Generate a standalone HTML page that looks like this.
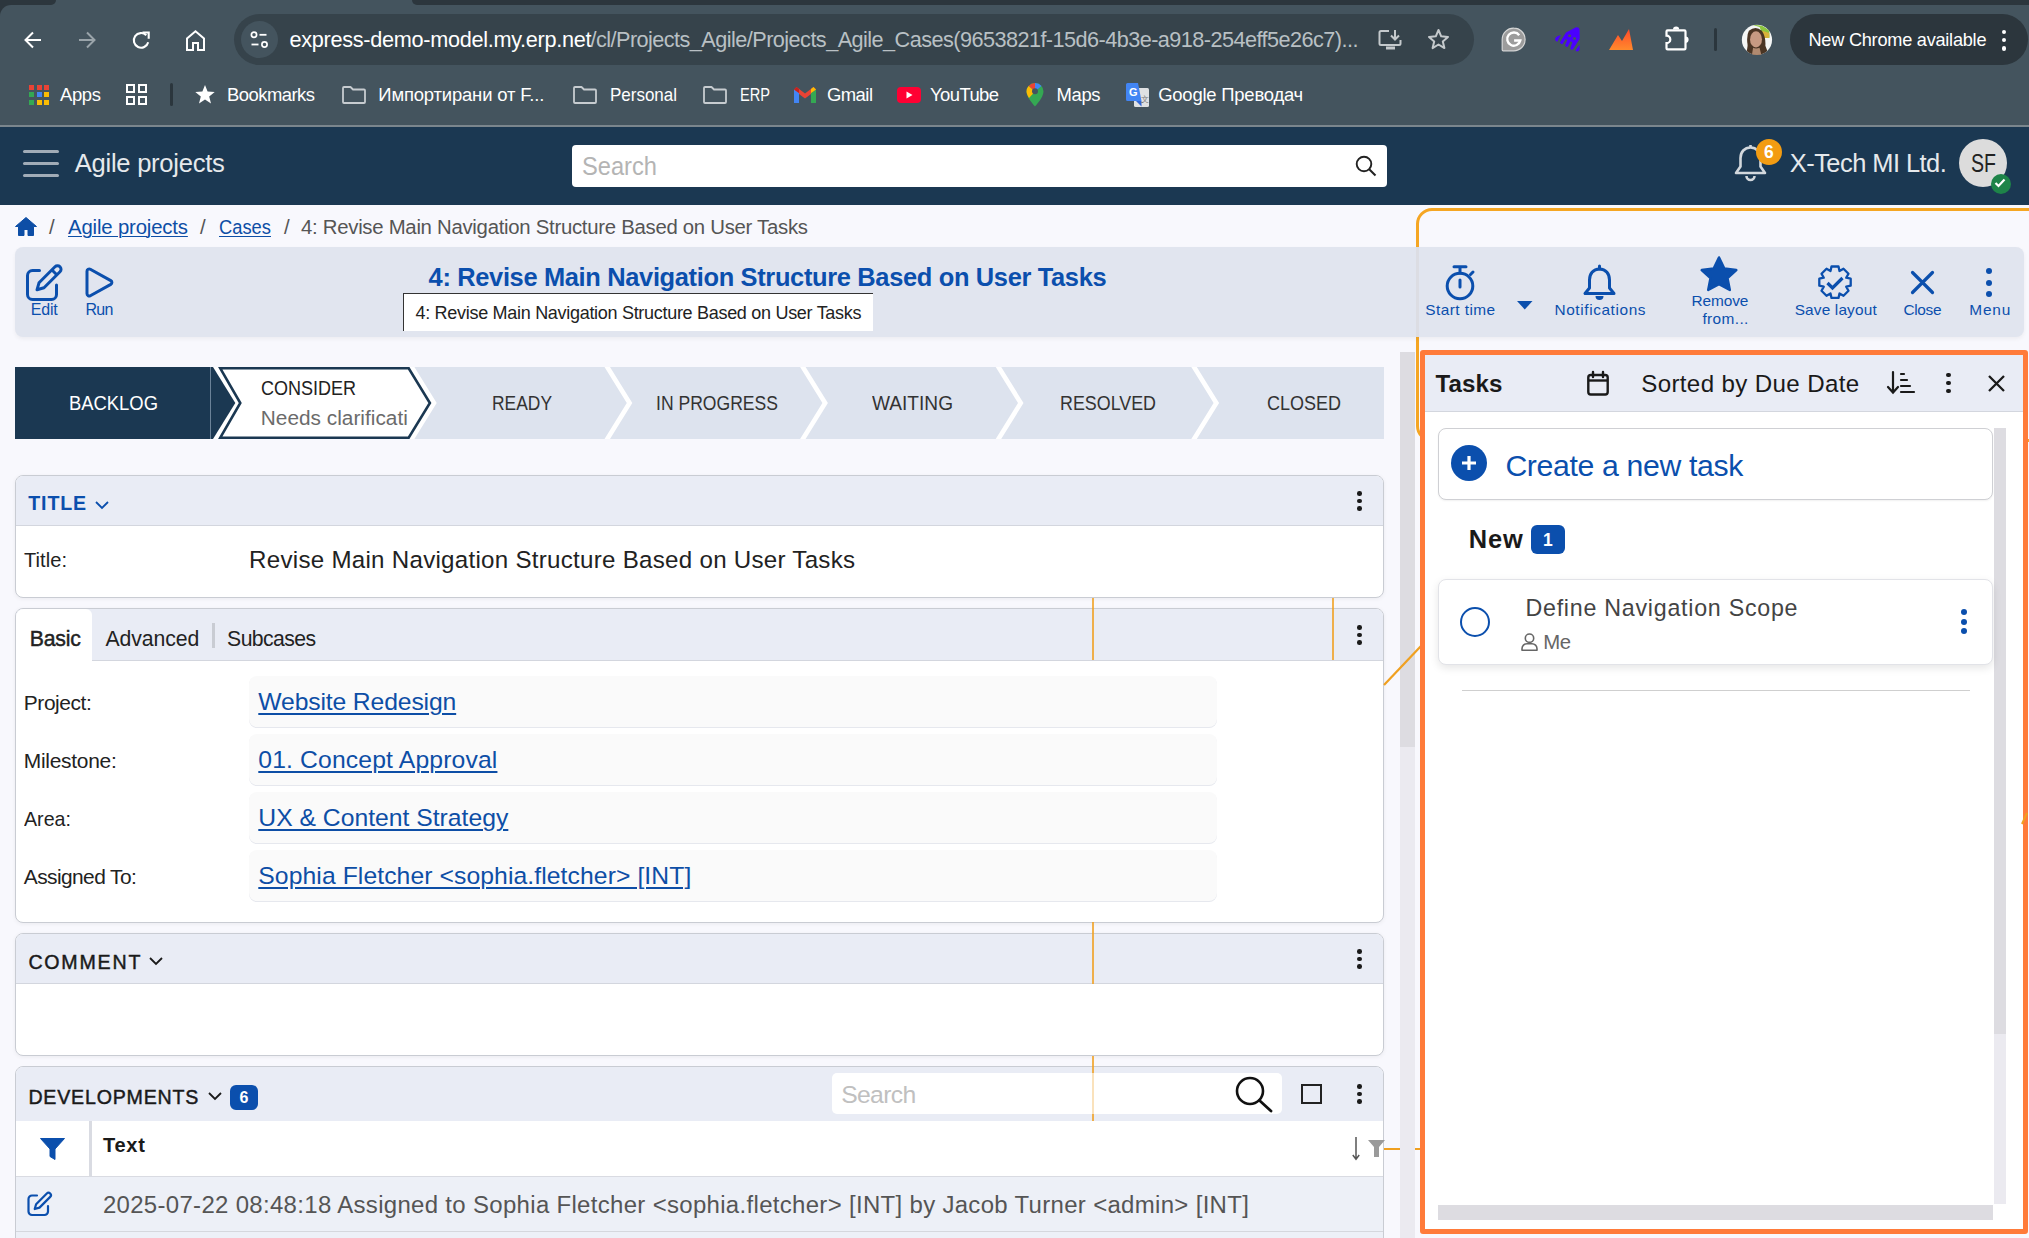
<!DOCTYPE html>
<html><head><meta charset="utf-8">
<style>
*{box-sizing:border-box;margin:0;padding:0}
html,body{width:2029px;height:1238px;overflow:hidden;background:#f8f8fd;font-family:"Liberation Sans",sans-serif;position:relative}
.a{position:absolute}
.t{position:absolute;white-space:nowrap;line-height:1}
svg{position:absolute;overflow:visible}
</style></head><body>
<div class="a" style="left:0px;top:0px;width:2029px;height:125px;background:#44545e"></div>
<div class="a" style="left:0px;top:0px;width:56px;height:5px;background:#2c363d;border-bottom-right-radius:6px"></div>
<div class="a" style="left:0px;top:0px;width:12px;height:16px;background:#2c363d"></div>
<div class="a" style="left:0px;top:5px;width:60px;height:30px;background:#44545e;border-top-left-radius:11px"></div>
<div class="a" style="left:412px;top:0px;width:1617px;height:5px;background:#2c363d;border-bottom-left-radius:8px"></div>
<div class="a" style="left:0px;top:125px;width:2029px;height:2px;background:#7b868d"></div>
<svg style="left:24px;top:31px;" width="18" height="18" viewBox="0 0 18 18"><path d="M17 9H2M9 1.5L1.5 9L9 16.5" fill="none" stroke="#fff" stroke-width="2"/></svg>
<svg style="left:78px;top:31px;" width="18" height="18" viewBox="0 0 18 18"><path d="M1 9h15M9 1.5L16.5 9L9 16.5" fill="none" stroke="#9aa4aa" stroke-width="2"/></svg>
<svg style="left:132px;top:31px;" width="19" height="19" viewBox="0 0 19 19"><path d="M16.2 11.2A7.3 7.3 0 1 1 14.3 4.2" fill="none" stroke="#fff" stroke-width="2.1"/><path d="M10.5 1.5h6.2v6.2" fill="none" stroke="#fff" stroke-width="2.1"/></svg>
<svg style="left:186px;top:30px;" width="19" height="21" viewBox="0 0 19 21"><path d="M1 20V8.5L9.5 1.2L18 8.5V20h-6v-7H7v7z" fill="none" stroke="#fff" stroke-width="2" stroke-linejoin="miter"/></svg>
<div class="a" style="left:234px;top:14px;width:1240px;height:51px;background:#36434b;border-radius:26px"></div>
<div class="a" style="left:241px;top:21px;width:37px;height:37px;background:#44545e;border-radius:50%"></div>
<svg style="left:250px;top:31px;" width="19" height="18" viewBox="0 0 19 18"><circle cx="4" cy="3.8" r="2.6" fill="none" stroke="#fff" stroke-width="1.7"/><path d="M9.5 3.8h7" stroke="#fff" stroke-width="1.8"/><circle cx="14.5" cy="13.5" r="2.6" fill="none" stroke="#fff" stroke-width="1.7"/><path d="M1.5 13.5h7" stroke="#fff" stroke-width="1.8"/></svg>
<div class="t" id="url1" style="left:289.5px;top:29.00px;font-size:21.66px;color:#fff;font-weight:400;letter-spacing:-0.290px;">express-demo-model.my.erp.net</div>
<div class="t" id="url2" style="left:590.5px;top:29.00px;font-size:21.66px;color:#b9c0c4;font-weight:400;letter-spacing:-0.545px;">/cl/Projects_Agile/Projects_Agile_Cases(9653821f-15d6-4b3e-a918-254eff5e26c7)...</div>
<svg style="left:1378px;top:29px;" width="25" height="22" viewBox="0 0 25 22"><path d="M11 2H3a1.5 1.5 0 0 0-1.5 1.5v11A1.5 1.5 0 0 0 3 16h18a1.5 1.5 0 0 0 1.5-1.5V11" fill="none" stroke="#c4c9cc" stroke-width="2"/><path d="M17 1v9M13 6.5l4 4l4-4" fill="none" stroke="#c4c9cc" stroke-width="2"/><path d="M8 19h9" stroke="#c4c9cc" stroke-width="3"/></svg>
<svg style="left:1427px;top:28px;" width="23" height="22" viewBox="0 0 23 22"><path d="M11.5 2l2.7 6.3l6.8.6l-5.2 4.5l1.6 6.7l-5.9-3.6l-5.9 3.6l1.6-6.7L2 8.9l6.8-.6z" fill="none" stroke="#c4c9cc" stroke-width="2" stroke-linejoin="round"/></svg>
<svg style="left:1501px;top:27px;" width="25" height="25" viewBox="0 0 25 25"><path d="M12.8 1.2A11.3 11.3 0 1 1 12.8 23.8H2.2a1 1 0 0 1-1-1V12.5A11.3 11.3 0 0 1 12.8 1.2z" fill="#9c9c9c" stroke="#d6d6d6" stroke-width="1.2"/><path d="M18.2 8.2A6.6 6.6 0 1 0 19.3 13.5h-6.2" fill="none" stroke="#fff" stroke-width="2.4"/></svg>
<svg style="left:1545px;top:20px" width="50" height="40" viewBox="0 0 1548 1238"><path d="M650 390L960 225Q1060 210 1070 300L1075 580L860 915Q820 935 780 880L845 690L790 660L705 830Q660 850 620 790L690 620L640 590L545 745Q500 760 460 700z" fill="#4a00ff"/><ellipse cx="760" cy="490" rx="48" ry="40" fill="#44545e"/><ellipse cx="915" cy="572" rx="48" ry="40" fill="#44545e"/><path d="M490 465L380 670Q300 660 320 560Q360 500 490 465z" fill="#4a00ff"/><path d="M1075 770L1070 920Q1020 1000 950 960Q940 900 1075 770z" fill="#4a00ff"/></svg>
<svg style="left:1609px;top:29px;" width="25" height="21" viewBox="0 0 25 21"><defs><linearGradient id="og" x1="0" y1="0" x2="0" y2="1"><stop offset="0" stop-color="#ff4a2a"/><stop offset="1" stop-color="#ff8a2c"/></linearGradient></defs><path d="M0 21L9 6L13 12L20 0L24 21z" fill="url(#og)"/></svg>
<svg style="left:1664px;top:25px;" width="28" height="27" viewBox="0 0 28 27"><path d="M3.6 5.3H20.4a1.1 1.1 0 0 1 1.1 1.1V23.3a1.1 1.1 0 0 1-1.1 1.1H3.6a1.1 1.1 0 0 1-1.1-1.1V18.2A3.7 3.7 0 0 0 2.5 10.6V6.4a1.1 1.1 0 0 1 1.1-1.1z" fill="none" stroke="#fff" stroke-width="2.2"/><path d="M9 4.6a3.1 3.1 0 0 1 6.2 0z" fill="#fff"/><path d="M21.5 11.6a3.1 3.1 0 0 1 0 6.2z" fill="#fff"/></svg>
<div class="a" style="left:1714px;top:28px;width:3px;height:23px;background:#2b363d;border-radius:2px"></div>
<svg style="left:1735px;top:20px" width="45" height="40" viewBox="0 0 1393 1238"><defs><clipPath id="avc"><circle cx="680" cy="615" r="468"/></clipPath></defs><g clip-path="url(#avc)"><rect x="0" y="0" width="1393" height="1238" fill="#f4f6f5"/><path d="M500 140L840 180L1060 320L1070 550L900 560L760 220z" fill="#8cc63f"/><path d="M840 330L1060 400L1060 550L900 560z" fill="#d9b23a"/><path d="M430 330Q640 170 830 330Q960 520 940 800Q1000 950 1050 1100L300 1100Q420 900 380 700Q360 450 430 330z" fill="#4a3524"/><ellipse cx="650" cy="600" rx="185" ry="250" fill="#c79a82"/><path d="M560 860Q650 900 760 860L820 1100L520 1100z" fill="#b08a70"/></g></svg>
<div class="a" style="left:1790px;top:14px;width:238px;height:51px;background:#2c363d;border-radius:26px"></div>
<div class="t" id="ncr" style="left:1808.5px;top:31.00px;font-size:18.17px;color:#fff;font-weight:400;letter-spacing:-0.245px;">New Chrome available</div>
<div class="a" style="left:2001.7px;top:29.5px;width:4.6px;height:4.6px;background:#fff;border-radius:50%"></div>
<div class="a" style="left:2001.7px;top:37.7px;width:4.6px;height:4.6px;background:#fff;border-radius:50%"></div>
<div class="a" style="left:2001.7px;top:46.0px;width:4.6px;height:4.6px;background:#fff;border-radius:50%"></div>
<div class="a" style="left:29.0px;top:84.5px;width:5px;height:5px;background:#ea4335"></div>
<div class="a" style="left:36.5px;top:84.5px;width:5px;height:5px;background:#ea4335"></div>
<div class="a" style="left:44.0px;top:84.5px;width:5px;height:5px;background:#ea4335"></div>
<div class="a" style="left:29.0px;top:92.0px;width:5px;height:5px;background:#34a853"></div>
<div class="a" style="left:36.5px;top:92.0px;width:5px;height:5px;background:#4285f4"></div>
<div class="a" style="left:44.0px;top:92.0px;width:5px;height:5px;background:#fbbc04"></div>
<div class="a" style="left:29.0px;top:99.5px;width:5px;height:5px;background:#34a853"></div>
<div class="a" style="left:36.5px;top:99.5px;width:5px;height:5px;background:#fbbc04"></div>
<div class="a" style="left:44.0px;top:99.5px;width:5px;height:5px;background:#fbbc04"></div>
<div class="t" id="bm1" style="left:60.0px;top:86.00px;font-size:18.46px;color:#ffffff;font-weight:400;letter-spacing:-0.344px;">Apps</div>
<svg style="left:126px;top:84px;" width="21" height="21" viewBox="0 0 21 21"><rect x="1" y="1" width="7" height="7" fill="none" stroke="#fff" stroke-width="2"/><rect x="13" y="1" width="7" height="7" fill="none" stroke="#fff" stroke-width="2"/><rect x="1" y="13" width="7" height="7" fill="none" stroke="#fff" stroke-width="2"/><rect x="13" y="13" width="7" height="7" fill="none" stroke="#fff" stroke-width="2"/></svg>
<div class="a" style="left:170px;top:83px;width:3px;height:23px;background:#2b363d;border-radius:2px"></div>
<svg style="left:195px;top:85px;" width="20" height="19" viewBox="0 0 20 19"><path d="M10 0l2.6 6.6l7.1.4l-5.5 4.5l1.8 6.9L10 14.5l-6 3.9l1.8-6.9L.3 7l7.1-.4z" fill="#fff"/></svg>
<div class="t" id="bm2" style="left:227.0px;top:86.00px;font-size:18.46px;color:#ffffff;font-weight:400;letter-spacing:-0.527px;">Bookmarks</div>
<svg style="left:342px;top:86px;" width="24" height="18" viewBox="0 0 24 18"><path d="M1 2a1 1 0 0 1 1-1h6.5l2.5 2.5H22a1 1 0 0 1 1 1V16a1 1 0 0 1-1 1H2a1 1 0 0 1-1-1z" fill="none" stroke="#c7ccd0" stroke-width="1.8" stroke-linejoin="round"/></svg>
<div class="t" id="bm3" style="left:378.3px;top:86.00px;font-size:18.46px;color:#ffffff;font-weight:400;letter-spacing:-0.160px;">Импортирани от F...</div>
<svg style="left:573px;top:86px;" width="24" height="18" viewBox="0 0 24 18"><path d="M1 2a1 1 0 0 1 1-1h6.5l2.5 2.5H22a1 1 0 0 1 1 1V16a1 1 0 0 1-1 1H2a1 1 0 0 1-1-1z" fill="none" stroke="#c7ccd0" stroke-width="1.8" stroke-linejoin="round"/></svg>
<div class="t" id="bm4" style="left:610.0px;top:86.00px;font-size:18.46px;color:#ffffff;font-weight:400;letter-spacing:0.000px;transform:scaleX(0.9206);transform-origin:0 0;">Personal</div>
<svg style="left:703px;top:86px;" width="24" height="18" viewBox="0 0 24 18"><path d="M1 2a1 1 0 0 1 1-1h6.5l2.5 2.5H22a1 1 0 0 1 1 1V16a1 1 0 0 1-1 1H2a1 1 0 0 1-1-1z" fill="none" stroke="#c7ccd0" stroke-width="1.8" stroke-linejoin="round"/></svg>
<div class="t" id="bm5" style="left:740.0px;top:86.00px;font-size:18.46px;color:#ffffff;font-weight:400;letter-spacing:0.000px;transform:scaleX(0.7911);transform-origin:0 0;">ERP</div>
<svg style="left:794px;top:87px;" width="22" height="16" viewBox="0 0 22 16"><path d="M0 2.5V16h5V7l6 4.5L17 7v9h5V2.5L19.5 0L11 6.5L2.5 0z" fill="#ea4335"/><path d="M0 2.5V16h5V6z" fill="#4285f4"/><path d="M17 6v10h5V2.5z" fill="#34a853"/><path d="M19.5 0L22 2.5L17 6V2z" fill="#fbbc04"/><path d="M0 2.5L2.5 0L5 2v4z" fill="#c5221f"/></svg>
<div class="t" id="bm6" style="left:827.0px;top:86.00px;font-size:18.46px;color:#ffffff;font-weight:400;letter-spacing:-0.539px;">Gmail</div>
<svg style="left:897px;top:87px;" width="24" height="16" viewBox="0 0 24 16"><rect x="0" y="0" width="24" height="16" rx="4" fill="#ff0033"/><path d="M9.5 4.5v7l6-3.5z" fill="#fff"/></svg>
<div class="t" id="bm7" style="left:930.0px;top:86.00px;font-size:18.46px;color:#ffffff;font-weight:400;letter-spacing:-0.576px;">YouTube</div>
<svg style="left:1026px;top:83px;" width="18" height="24" viewBox="0 0 18 24"><path d="M9 0a8.5 8.5 0 0 1 8.5 8.5c0 6-8.5 15-8.5 15S.5 14.5.5 8.5A8.5 8.5 0 0 1 9 0z" fill="#34a853"/><path d="M9 0a8.5 8.5 0 0 1 6.5 3L9 8.5z" fill="#4285f4"/><path d="M2.5 3A8.5 8.5 0 0 1 9 0v8.5z" fill="#ea4335"/><path d="M.5 8.5A8.5 8.5 0 0 1 2.5 3L9 8.5L3 15C1.5 12.5.5 10.5.5 8.5z" fill="#fbbc04"/><circle cx="9" cy="8.3" r="3" fill="#44545e"/></svg>
<div class="t" id="bm8" style="left:1056.6px;top:86.00px;font-size:18.46px;color:#ffffff;font-weight:400;letter-spacing:-0.365px;">Maps</div>
<svg style="left:1126px;top:83px;" width="23" height="24" viewBox="0 0 23 24"><rect x="8" y="5" width="15" height="19" rx="1.5" fill="#dfe1e3"/><path d="M0 1.5A1.5 1.5 0 0 1 1.5 0H12l3.5 18H1.5A1.5 1.5 0 0 1 0 16.5z" fill="#4285f4"/><path d="M10 18l5.5 5.5V18z" fill="#3367d6"/><text x="3" y="13" font-size="11" font-weight="700" fill="#fff" font-family="Liberation Sans">G</text><text x="15" y="19" font-size="8" fill="#777" font-family="Liberation Sans">文</text></svg>
<div class="t" id="bm9" style="left:1158.2px;top:86.00px;font-size:18.46px;color:#ffffff;font-weight:400;letter-spacing:-0.214px;">Google Преводач</div>
<div class="a" style="left:0px;top:127px;width:2029px;height:78px;background:#1b3852"></div>
<div class="a" style="left:22.5px;top:150px;width:36px;height:3.2px;background:#a1acb7;border-radius:2px"></div>
<div class="a" style="left:22.5px;top:162px;width:36px;height:3.2px;background:#a1acb7;border-radius:2px"></div>
<div class="a" style="left:22.5px;top:174px;width:36px;height:3.2px;background:#a1acb7;border-radius:2px"></div>
<div class="t" id="hd1" style="left:74.8px;top:151.00px;font-size:25.58px;color:#e6e9ec;font-weight:400;letter-spacing:-0.273px;">Agile projects</div>
<div class="a" style="left:572px;top:145px;width:815px;height:42px;background:#fff;border-radius:4px"></div>
<div class="t" id="hd2" style="left:582.0px;top:154.00px;font-size:25.87px;color:#b4b4b4;font-weight:400;letter-spacing:0.000px;transform:scaleX(0.9153);transform-origin:0 0;">Search</div>
<svg style="left:1355px;top:155px;" width="22" height="22" viewBox="0 0 22 22"><circle cx="9" cy="9" r="7.3" fill="none" stroke="#222" stroke-width="1.9"/><path d="M14.2 14.2L20.5 20.5" stroke="#222" stroke-width="2"/></svg>
<svg style="left:1734px;top:144px;" width="33" height="37" viewBox="0 0 33 37"><path d="M16.5 3.5c-6 0-10 4.5-10 10.5v8.5l-4.5 6.5h29l-4.5-6.5V14c0-6-4-10.5-10-10.5z" fill="none" stroke="#d3d8dd" stroke-width="2.6" stroke-linejoin="round"/><path d="M16.5 1v3" stroke="#d3d8dd" stroke-width="2.6"/><path d="M12.5 32a4 4 0 0 0 8 0" fill="none" stroke="#d3d8dd" stroke-width="2.6"/></svg>
<div class="a" style="left:1756px;top:138.5px;width:26px;height:26px;background:#f39c12;border-radius:50%"></div>
<div class="t" id="hd6" style="left:1764.0px;top:144.00px;font-size:17.44px;color:#fff;font-weight:700;letter-spacing:0.000px;">6</div>
<div class="t" id="hd3" style="left:1789.8px;top:151.00px;font-size:25.44px;color:#e6e9ec;font-weight:400;letter-spacing:-0.538px;">X-Tech MI Ltd.</div>
<div class="a" style="left:1959px;top:139px;width:48px;height:48px;background:#dcdcdc;border-radius:50%"></div>
<div class="t" id="hd4" style="left:1971.3px;top:151.00px;font-size:25.44px;color:#222;font-weight:400;letter-spacing:0.000px;transform:scaleX(0.7689);transform-origin:0 0;">SF</div>
<div class="a" style="left:1990.5px;top:173.5px;width:20px;height:20px;background:#1e8449;border-radius:50%"></div>
<svg style="left:1994px;top:178px;" width="12" height="10" viewBox="0 0 12 10"><path d="M1.5 5l3 3l6-6.5" fill="none" stroke="#fff" stroke-width="2.2"/></svg>
<svg style="left:15px;top:217px;" width="22" height="19" viewBox="0 0 22 19"><path d="M11 0.5L0.5 9.5h3V18.5h5.5v-6h4v6h5.5V9.5h3z" fill="#0d4ea6" stroke="#0d4ea6" stroke-width="1" stroke-linejoin="round"/></svg>
<div class="t" id="bc1" style="left:49.0px;top:217.00px;font-size:20.35px;color:#555;font-weight:400;letter-spacing:0.000px;">/</div>
<div class="t" id="bc2" style="left:68.0px;top:217.00px;font-size:20.35px;color:#0d4ea6;font-weight:400;letter-spacing:-0.163px;text-decoration:underline;text-underline-offset:2px;text-decoration-thickness:1px">Agile projects</div>
<div class="t" id="bc3" style="left:200.0px;top:217.00px;font-size:20.35px;color:#555;font-weight:400;letter-spacing:0.000px;">/</div>
<div class="t" id="bc4" style="left:219.0px;top:217.00px;font-size:20.35px;color:#0d4ea6;font-weight:400;letter-spacing:0.000px;transform:scaleX(0.9017);transform-origin:0 0;text-decoration:underline;text-underline-offset:2px;text-decoration-thickness:1px">Cases</div>
<div class="t" id="bc5" style="left:284.0px;top:217.00px;font-size:20.35px;color:#555;font-weight:400;letter-spacing:0.000px;">/</div>
<div class="t" id="bc6" style="left:301.0px;top:217.00px;font-size:20.35px;color:#555;font-weight:400;letter-spacing:-0.278px;">4: Revise Main Navigation Structure Based on User Tasks</div>
<div class="a" style="left:1416px;top:208px;width:640px;height:234px;border:3px solid #f5a623;border-radius:16px"></div>
<div class="a" style="left:15px;top:247px;width:2009px;height:90px;background:#e1e5ef;border-radius:8px;box-shadow:0 2px 4px rgba(0,0,0,0.05)"></div>
<div class="a" style="left:1416px;top:247px;width:3px;height:90px;background:#dcdde3"></div>
<svg style="left:26px;top:265px;" width="36" height="36" viewBox="0 0 36 36"><path d="M13.5 5.5H6.5A5 5 0 0 0 1.5 10.5V29.5A5 5 0 0 0 6.5 34.5H25.5A5 5 0 0 0 30.5 29.5V20" fill="none" stroke="#0b4fad" stroke-width="3" stroke-linecap="round"/><path d="M29 1.8a3.5 3.5 0 0 1 5 5L18 22.8l-7 2l2-7z" fill="none" stroke="#0b4fad" stroke-width="3" stroke-linejoin="round"/><path d="M26 5l5 5" stroke="#0b4fad" stroke-width="3"/></svg>
<div class="t" id="tb1" style="left:30.8px;top:302.00px;font-size:15.99px;color:#0b4fad;font-weight:400;letter-spacing:-0.182px;">Edit</div>
<svg style="left:85px;top:267px;" width="28" height="31" viewBox="0 0 28 31"><path d="M2 4.2a2.2 2.2 0 0 1 3.3-1.9l20.5 11.3a2.2 2.2 0 0 1 0 3.8L5.3 28.7A2.2 2.2 0 0 1 2 26.8z" fill="none" stroke="#0b4fad" stroke-width="3" stroke-linejoin="round"/></svg>
<div class="t" id="tb2" style="left:85.4px;top:302.00px;font-size:15.99px;color:#0b4fad;font-weight:400;letter-spacing:-0.664px;">Run</div>
<div class="t" id="tb3" style="left:428.6px;top:265.00px;font-size:25.44px;color:#0b4fad;font-weight:700;letter-spacing:-0.342px;">4: Revise Main Navigation Structure Based on User Tasks</div>
<div class="a" style="left:403px;top:293px;width:470px;height:38px;background:#fff;border-top:1.5px solid #333;border-left:1.5px solid #333"></div>
<div class="t" id="tb4" style="left:415.5px;top:304.00px;font-size:18.02px;color:#222;font-weight:400;letter-spacing:-0.302px;">4: Revise Main Navigation Structure Based on User Tasks</div>
<svg style="left:1445px;top:265px;" width="31" height="36" viewBox="0 0 31 36"><circle cx="15" cy="21" r="12.8" fill="none" stroke="#0b4fad" stroke-width="3"/><path d="M9 1.8h12M15 2v6M15 15v7" stroke="#0b4fad" stroke-width="3" stroke-linecap="round"/><path d="M25.5 9.5l2.5-2.5" stroke="#0b4fad" stroke-width="3" stroke-linecap="round"/></svg>
<div class="t" id="tb5" style="left:1425.2px;top:302.00px;font-size:15.41px;color:#0b4fad;font-weight:400;letter-spacing:0.453px;">Start time</div>
<svg style="left:1517px;top:301px;" width="16" height="9" viewBox="0 0 16 9"><path d="M0 0h15.5L7.75 8.5z" fill="#0b4fad"/></svg>
<svg style="left:1583px;top:265px;" width="33" height="36" viewBox="0 0 33 36"><path d="M16.5 4c-6.5 0-10 5-10 11v8l-4.5 5.5h29L26.5 23v-8c0-6-3.5-11-10-11z" fill="none" stroke="#0b4fad" stroke-width="3" stroke-linejoin="round"/><path d="M16.5 1v3" stroke="#0b4fad" stroke-width="3" stroke-linecap="round"/><path d="M12.5 31a4 4 0 0 0 8 0z" fill="#0b4fad"/></svg>
<div class="t" id="tb6" style="left:1554.5px;top:302.00px;font-size:15.41px;color:#0b4fad;font-weight:400;letter-spacing:0.590px;">Notifications</div>
<svg style="left:1700px;top:256px;" width="38" height="36" viewBox="0 0 38 36"><path d="M19 1.5l5.3 11l12 1.5l-8.8 8.2l2.3 11.8L19 28.2L8.2 34l2.3-11.8L1.7 14l12-1.5z" fill="#0b4fad" stroke="#0b4fad" stroke-width="2.5" stroke-linejoin="round"/></svg>
<div class="t" id="tb7" style="left:1691.4px;top:293.00px;font-size:15.41px;color:#0b4fad;font-weight:400;letter-spacing:-0.075px;">Remove</div>
<div class="t" id="tb8" style="left:1702.4px;top:311.00px;font-size:15.41px;color:#0b4fad;font-weight:400;letter-spacing:0.391px;">from...</div>
<svg style="left:1817px;top:265px;" width="36" height="36" viewBox="0 0 36 36"><path d="M14.5 1.5h7l1 4.5l4-2.3l5 5l-2.3 4l4.5 1v7l-4.5 1l2.3 4l-5 5l-4-2.3l-1 4.5h-7l-1-4.5l-4 2.3l-5-5l2.3-4l-4.5-1v-7l4.5-1l-2.3-4l5-5l4 2.3z" fill="none" stroke="#0b4fad" stroke-width="2.3" stroke-linejoin="round"/><path d="M10.5 18l5 5l10-10" fill="none" stroke="#0b4fad" stroke-width="3.2"/></svg>
<div class="t" id="tb9" style="left:1794.7px;top:302.00px;font-size:15.41px;color:#0b4fad;font-weight:400;letter-spacing:0.148px;">Save layout</div>
<svg style="left:1911px;top:271px;" width="23" height="23" viewBox="0 0 23 23"><path d="M1.5 1.5l20 20M21.5 1.5l-20 20" stroke="#0b4fad" stroke-width="3.2" stroke-linecap="round"/></svg>
<div class="t" id="tb10" style="left:1903.5px;top:302.00px;font-size:15.41px;color:#0b4fad;font-weight:400;letter-spacing:-0.348px;">Close</div>
<div class="a" style="left:1986.2px;top:268px;width:6px;height:6px;background:#0b4fad;border-radius:50%"></div>
<div class="a" style="left:1986.2px;top:279.5px;width:6px;height:6px;background:#0b4fad;border-radius:50%"></div>
<div class="a" style="left:1986.2px;top:290.8px;width:6px;height:6px;background:#0b4fad;border-radius:50%"></div>
<div class="t" id="tb11" style="left:1969.3px;top:302.00px;font-size:15.41px;color:#0b4fad;font-weight:400;letter-spacing:0.818px;">Menu</div>
<div class="a" style="left:1400px;top:352px;width:15px;height:886px;background:#ebeaf0"></div>
<div class="a" style="left:1400px;top:352px;width:15px;height:395px;background:#dddce1"></div>
<div class="a" style="left:15px;top:367px;width:1369px;height:72px;background:#fff"></div>
<svg style="left:0px;top:0px;pointer-events:none" width="2029" height="1238" viewBox="0 0 2029 1238"><polygon points="15,367 213,367 235.3,403 213,439 15,439" fill="#1b3852"/><line x1="210.5" y1="367" x2="210.5" y2="439" stroke="#6b8298" stroke-width="1"/><polygon points="220.3,368.3 408.7,368.3 429.9,403 408.7,437.7 220.3,437.7 240.3,403" fill="#fff" stroke="#1b3852" stroke-width="2.6" stroke-linejoin="miter"/><polygon points="414.4,367 604.5,367 626.8,403 604.5,439 414.4,439 436.7,403" fill="#dde3ee"/><polygon points="610.0,367 800.0999999999999,367 822.3999999999999,403 800.0999999999999,439 610.0,439 632.3,403" fill="#dde3ee"/><polygon points="805.5999999999999,367 995.7,367 1018.0,403 995.7,439 805.5999999999999,439 827.8999999999999,403" fill="#dde3ee"/><polygon points="1001.2,367 1191.3,367 1213.6,403 1191.3,439 1001.2,439 1023.5,403" fill="#dde3ee"/><polygon points="1196.8,367 1384,367 1384,439 1196.8,439 1219.1,403" fill="#dde3ee"/></svg>
<div class="t" id="st1" style="left:69.2px;top:393.00px;font-size:20.79px;color:#fff;font-weight:400;letter-spacing:0.000px;transform:scaleX(0.8857);transform-origin:0 0;">BACKLOG</div>
<div class="t" id="st2" style="left:260.8px;top:378.00px;font-size:20.79px;color:#222;font-weight:400;letter-spacing:0.000px;transform:scaleX(0.8660);transform-origin:0 0;">CONSIDER</div>
<div class="t" id="st3" style="left:260.8px;top:408.00px;font-size:20.79px;color:#6b6b6b;font-weight:400;letter-spacing:0.020px;">Needs clarificati</div>
<div class="t" id="st4" style="left:491.5px;top:393.00px;font-size:20.79px;color:#333;font-weight:400;letter-spacing:0.000px;transform:scaleX(0.8379);transform-origin:0 0;">READY</div>
<div class="t" id="st5" style="left:655.8px;top:393.00px;font-size:20.79px;color:#333;font-weight:400;letter-spacing:0.000px;transform:scaleX(0.8452);transform-origin:0 0;">IN PROGRESS</div>
<div class="t" id="st6" style="left:872.0px;top:393.00px;font-size:20.79px;color:#333;font-weight:400;letter-spacing:0.000px;transform:scaleX(0.9191);transform-origin:0 0;">WAITING</div>
<div class="t" id="st7" style="left:1060.2px;top:393.00px;font-size:20.79px;color:#333;font-weight:400;letter-spacing:0.000px;transform:scaleX(0.8599);transform-origin:0 0;">RESOLVED</div>
<div class="t" id="st8" style="left:1266.7px;top:393.00px;font-size:20.79px;color:#333;font-weight:400;letter-spacing:0.000px;transform:scaleX(0.8658);transform-origin:0 0;">CLOSED</div>
<div class="a" style="left:15px;top:475px;width:1369px;height:123px;background:#fff;border:1px solid #c9ccd3;border-radius:8px;box-shadow:0 1px 4px rgba(0,0,0,0.06);overflow:hidden"><div class="a" style="left:0;top:0;width:100%;height:50px;background:#e9ecf5;border-bottom:1px solid #d3d6de"></div></div>
<div class="t" id="c1" style="left:28.2px;top:494.00px;font-size:19.62px;color:#0b4fad;font-weight:700;letter-spacing:0.883px;">TITLE</div>
<svg style="left:95px;top:501px;" width="14" height="8" viewBox="0 0 14 8"><path d="M1 1l6 6l6-6" fill="none" stroke="#0b4fad" stroke-width="1.8"/></svg>
<div class="a" style="left:1357.1000000000001px;top:491.09999999999997px;width:4.6px;height:4.6px;background:#1a1a1a;border-radius:50%"></div>
<div class="a" style="left:1357.1000000000001px;top:498.7px;width:4.6px;height:4.6px;background:#1a1a1a;border-radius:50%"></div>
<div class="a" style="left:1357.1000000000001px;top:506.3px;width:4.6px;height:4.6px;background:#1a1a1a;border-radius:50%"></div>
<div class="t" id="c2" style="left:24.0px;top:550.00px;font-size:20.06px;color:#222;font-weight:400;letter-spacing:0.059px;">Title:</div>
<div class="t" id="c3" style="left:249.1px;top:548.00px;font-size:24.13px;color:#222;font-weight:400;letter-spacing:0.270px;">Revise Main Navigation Structure Based on User Tasks</div>
<div class="a" style="left:15px;top:608px;width:1369px;height:315px;background:#fff;border:1px solid #c9ccd3;border-radius:8px;box-shadow:0 1px 4px rgba(0,0,0,0.06);overflow:hidden"><div class="a" style="left:0;top:0;width:100%;height:52px;background:#e9ecf5;border-bottom:1px solid #d3d6de"></div></div>
<div class="a" style="left:16px;top:609px;width:76px;height:52px;background:#fff;border-top-left-radius:8px;border-top-right-radius:6px"></div>
<div class="t" id="c4" style="left:29.8px;top:628.00px;font-size:21.22px;color:#222;font-weight:400;letter-spacing:-0.223px;-webkit-text-stroke:0.45px #222">Basic</div>
<div class="t" id="c5" style="left:105.4px;top:628.00px;font-size:21.22px;color:#222;font-weight:400;letter-spacing:-0.056px;">Advanced</div>
<div class="a" style="left:211.5px;top:622.5px;width:3px;height:25px;background:#c9ccd3"></div>
<div class="t" id="c6" style="left:227.1px;top:628.00px;font-size:21.22px;color:#222;font-weight:400;letter-spacing:-0.598px;">Subcases</div>
<div class="a" style="left:1357.1000000000001px;top:625.1px;width:4.6px;height:4.6px;background:#1a1a1a;border-radius:50%"></div>
<div class="a" style="left:1357.1000000000001px;top:632.7px;width:4.6px;height:4.6px;background:#1a1a1a;border-radius:50%"></div>
<div class="a" style="left:1357.1000000000001px;top:640.3000000000001px;width:4.6px;height:4.6px;background:#1a1a1a;border-radius:50%"></div>
<div class="a" style="left:249px;top:676px;width:968px;height:51px;background:#fafafa;border-radius:8px;box-shadow:0 1px 0 #e6e8ee"></div>
<div class="t" id="f0l" style="left:23.8px;top:693.00px;font-size:20.93px;color:#222;font-weight:400;letter-spacing:-0.420px;">Project:</div>
<div class="t" id="f0v" style="left:258.3px;top:690.00px;font-size:24.71px;color:#0d4ea6;font-weight:400;letter-spacing:-0.135px;text-decoration:underline;text-underline-offset:3px;text-decoration-thickness:1.5px">Website Redesign</div>
<div class="a" style="left:249px;top:734px;width:968px;height:51px;background:#fafafa;border-radius:8px;box-shadow:0 1px 0 #e6e8ee"></div>
<div class="t" id="f1l" style="left:23.8px;top:751.00px;font-size:20.93px;color:#222;font-weight:400;letter-spacing:-0.262px;">Milestone:</div>
<div class="t" id="f1v" style="left:258.3px;top:748.00px;font-size:24.71px;color:#0d4ea6;font-weight:400;letter-spacing:0.146px;text-decoration:underline;text-underline-offset:3px;text-decoration-thickness:1.5px">01. Concept Approval</div>
<div class="a" style="left:249px;top:792px;width:968px;height:51px;background:#fafafa;border-radius:8px;box-shadow:0 1px 0 #e6e8ee"></div>
<div class="t" id="f2l" style="left:23.8px;top:809.00px;font-size:20.93px;color:#222;font-weight:400;letter-spacing:0.000px;transform:scaleX(0.9397);transform-origin:0 0;">Area:</div>
<div class="t" id="f2v" style="left:258.3px;top:806.00px;font-size:24.71px;color:#0d4ea6;font-weight:400;letter-spacing:0.005px;text-decoration:underline;text-underline-offset:3px;text-decoration-thickness:1.5px">UX &amp; Content Strategy</div>
<div class="a" style="left:249px;top:850px;width:968px;height:51px;background:#fafafa;border-radius:8px;box-shadow:0 1px 0 #e6e8ee"></div>
<div class="t" id="f3l" style="left:23.8px;top:867.00px;font-size:20.93px;color:#222;font-weight:400;letter-spacing:-0.584px;">Assigned To:</div>
<div class="t" id="f3v" style="left:258.3px;top:864.00px;font-size:24.71px;color:#0d4ea6;font-weight:400;letter-spacing:0.084px;text-decoration:underline;text-underline-offset:3px;text-decoration-thickness:1.5px">Sophia Fletcher &lt;sophia.fletcher&gt; [INT]</div>
<div class="a" style="left:15px;top:933px;width:1369px;height:123px;background:#fff;border:1px solid #c9ccd3;border-radius:8px;box-shadow:0 1px 4px rgba(0,0,0,0.06);overflow:hidden"><div class="a" style="left:0;top:0;width:100%;height:50px;background:#e9ecf5;border-bottom:1px solid #d3d6de"></div></div>
<div class="t" id="c7" style="left:28.4px;top:953.00px;font-size:19.62px;color:#1a1a1a;font-weight:400;letter-spacing:1.781px;-webkit-text-stroke:0.45px #1a1a1a">COMMENT</div>
<svg style="left:149px;top:957px;" width="14" height="8" viewBox="0 0 14 8"><path d="M1 1l6 6l6-6" fill="none" stroke="#1a1a1a" stroke-width="1.8"/></svg>
<div class="a" style="left:1357.1000000000001px;top:949.1px;width:4.6px;height:4.6px;background:#1a1a1a;border-radius:50%"></div>
<div class="a" style="left:1357.1000000000001px;top:956.7px;width:4.6px;height:4.6px;background:#1a1a1a;border-radius:50%"></div>
<div class="a" style="left:1357.1000000000001px;top:964.3000000000001px;width:4.6px;height:4.6px;background:#1a1a1a;border-radius:50%"></div>
<div class="a" style="left:15px;top:1066px;width:1369px;height:200px;background:#fff;border:1px solid #c9ccd3;border-radius:8px;overflow:hidden"><div class="a" style="left:0;top:0;width:100%;height:55px;background:#e9ecf5;border-bottom:1px solid #d3d6de"></div></div>
<div class="t" id="c8" style="left:28.4px;top:1088.00px;font-size:19.62px;color:#1a1a1a;font-weight:400;letter-spacing:0.793px;-webkit-text-stroke:0.45px #1a1a1a">DEVELOPMENTS</div>
<svg style="left:208px;top:1092px;" width="14" height="8" viewBox="0 0 14 8"><path d="M1 1l6 6l6-6" fill="none" stroke="#1a1a1a" stroke-width="1.8"/></svg>
<div class="a" style="left:230px;top:1085px;width:28px;height:25px;background:#0b4fad;border-radius:6px"></div>
<div class="t" id="c9" style="left:239.5px;top:1090.00px;font-size:15.99px;color:#fff;font-weight:700;letter-spacing:0.000px;">6</div>
<div class="a" style="left:832px;top:1073px;width:450px;height:41px;background:#fff;border-radius:5px"></div>
<div class="t" id="c10" style="left:841.2px;top:1083.00px;font-size:24.71px;color:#c0c0c0;font-weight:400;letter-spacing:-0.656px;">Search</div>
<svg style="left:1235px;top:1076px;" width="38" height="36" viewBox="0 0 38 36"><circle cx="15" cy="15" r="13" fill="none" stroke="#111" stroke-width="2.6"/><path d="M24.5 24.5L36 35" stroke="#111" stroke-width="2.8" stroke-linecap="round"/></svg>
<div class="a" style="left:1301px;top:1084px;width:21px;height:20px;border:2px solid #222"></div>
<div class="a" style="left:1357.1000000000001px;top:1084.1000000000001px;width:4.6px;height:4.6px;background:#1a1a1a;border-radius:50%"></div>
<div class="a" style="left:1357.1000000000001px;top:1091.7px;width:4.6px;height:4.6px;background:#1a1a1a;border-radius:50%"></div>
<div class="a" style="left:1357.1000000000001px;top:1099.3px;width:4.6px;height:4.6px;background:#1a1a1a;border-radius:50%"></div>
<div class="a" style="left:16px;top:1121px;width:1367px;height:56px;background:#fff;border-bottom:1px solid #d9dbe2"></div>
<div class="a" style="left:88.7px;top:1121px;width:3px;height:56px;background:#d9dbe2"></div>
<svg style="left:40px;top:1138px;" width="25" height="22" viewBox="0 0 25 22"><path d="M0.5 0.5h24L15 11v10.5l-5-3V11z" fill="#0b4fad" stroke="#0b4fad" stroke-linejoin="round"/></svg>
<div class="t" id="c11" style="left:102.9px;top:1135.00px;font-size:20.06px;color:#1a1a1a;font-weight:700;letter-spacing:0.755px;">Text</div>
<svg style="left:1352px;top:1137px;" width="8" height="24" viewBox="0 0 8 24"><path d="M4 0v22M0.8 18l3.2 4.2l3.2-4.2" fill="none" stroke="#555" stroke-width="1.5"/></svg>
<svg style="left:1368px;top:1140px;" width="17" height="17" viewBox="0 0 17 17"><path d="M0 0h17l-6 7v10h-5V7z" fill="#9a9a9a"/></svg>
<div class="a" style="left:16px;top:1177px;width:1367px;height:55px;background:#edf0f7;border-bottom:1px solid #d5d7dd"></div>
<div class="a" style="left:16px;top:1232px;width:1367px;height:10px;background:#edf0f7"></div>
<svg style="left:27px;top:1192px;" width="25" height="24" viewBox="0 0 25 24"><path d="M10 3.5H5A3.5 3.5 0 0 0 1.5 7v12.5A3.5 3.5 0 0 0 5 23h12.5A3.5 3.5 0 0 0 21 19.5V14" fill="none" stroke="#0b4fad" stroke-width="2.2" stroke-linecap="round"/><path d="M19.8 1.5a2.4 2.4 0 0 1 3.4 3.4L12.5 15.6l-4.8 1.4l1.4-4.8z" fill="none" stroke="#0b4fad" stroke-width="2.2" stroke-linejoin="round"/></svg>
<div class="t" id="c12" style="left:102.9px;top:1193.00px;font-size:23.98px;color:#555;font-weight:400;letter-spacing:0.321px;">2025-07-22 08:48:18 Assigned to Sophia Fletcher &lt;sophia.fletcher&gt; [INT] by Jacob Turner &lt;admin&gt; [INT]</div>
<div class="a" style="left:1092px;top:598px;width:2px;height:62px;background:rgba(240,160,32,0.8)"></div>
<div class="a" style="left:1332px;top:598px;width:2px;height:62px;background:rgba(240,160,32,0.8)"></div>
<div class="a" style="left:1092px;top:922px;width:2px;height:62px;background:rgba(240,160,32,0.8)"></div>
<div class="a" style="left:1092px;top:1056px;width:2px;height:17px;background:rgba(240,160,32,0.8)"></div>
<div class="a" style="left:1092px;top:1073px;width:2px;height:41px;background:rgba(240,160,32,0.3)"></div>
<div class="a" style="left:1092px;top:1114px;width:2px;height:7px;background:rgba(240,160,32,0.8)"></div>
<div class="a" style="left:1384px;top:1148px;width:16px;height:2px;background:#f0a020"></div>
<div class="a" style="left:1415px;top:1148px;width:6px;height:2px;background:#f0a020"></div>
<svg style="left:1380px;top:640px;" width="45" height="50" viewBox="0 0 45 50"><path d="M41 6L4 45" stroke="#f0a020" stroke-width="2.2"/></svg>
<div class="a" style="left:1420px;top:350px;width:608px;height:884px;background:#fff;border:5px solid #ff7b3a;border-radius:3px"></div>
<div class="a" style="left:1425px;top:355px;width:598px;height:57px;background:#e9ecf5;border-bottom:1px solid #d3d6de"></div>
<div class="t" id="tp1" style="left:1435.5px;top:372.00px;font-size:24.13px;color:#1a1a1a;font-weight:700;letter-spacing:0.094px;">Tasks</div>
<svg style="left:1587px;top:371px;" width="22" height="25" viewBox="0 0 22 25"><rect x="1.3" y="4" width="19.4" height="19.5" rx="2.5" fill="none" stroke="#1a1a1a" stroke-width="2.4"/><path d="M1.3 9.5h19.4" stroke="#1a1a1a" stroke-width="2.4"/><path d="M6 1v5M16 1v5" stroke="#1a1a1a" stroke-width="2.4" stroke-linecap="round"/></svg>
<div class="t" id="tp2" style="left:1641.2px;top:372.00px;font-size:24.13px;color:#1a1a1a;font-weight:400;letter-spacing:0.359px;">Sorted by Due Date</div>
<svg style="left:1887px;top:371px;" width="28" height="23" viewBox="0 0 28 23"><path d="M6 1v20M1 16l5 5.5l5-5.5" fill="none" stroke="#1a1a1a" stroke-width="2.2" stroke-linecap="round"/><path d="M14 3h3M14 9h6M14 15h9M14 21h13" stroke="#1a1a1a" stroke-width="2.2" stroke-linecap="round"/></svg>
<div class="a" style="left:1946.4px;top:372.7px;width:4.6px;height:4.6px;background:#1a1a1a;border-radius:50%"></div>
<div class="a" style="left:1946.4px;top:380.7px;width:4.6px;height:4.6px;background:#1a1a1a;border-radius:50%"></div>
<div class="a" style="left:1946.4px;top:388.7px;width:4.6px;height:4.6px;background:#1a1a1a;border-radius:50%"></div>
<svg style="left:1988px;top:375px;" width="17" height="17" viewBox="0 0 17 17"><path d="M1 1l15 15M16 1L1 16" stroke="#1a1a1a" stroke-width="2.3"/></svg>
<div class="a" style="left:1994px;top:428px;width:12px;height:776px;background:#ebeaf0"></div>
<div class="a" style="left:1994px;top:428px;width:12px;height:606px;background:#dddce1"></div>
<div class="a" style="left:1438px;top:1205px;width:555px;height:15px;background:#dddce1"></div>
<div class="a" style="left:1438px;top:428px;width:555px;height:72px;background:#fff;border:1px solid #cfd0d4;border-radius:8px;box-shadow:0 1px 2px rgba(0,0,0,0.06)"></div>
<div class="a" style="left:1451px;top:445px;width:36px;height:36px;background:#0b4fad;border-radius:50%"></div>
<svg style="left:1460px;top:454px;" width="18" height="18" viewBox="0 0 18 18"><path d="M9 2v14M2 9h14" stroke="#fff" stroke-width="3.2"/></svg>
<div class="t" id="tp3" style="left:1505.4px;top:451.00px;font-size:30.23px;color:#0b4fad;font-weight:400;letter-spacing:-0.348px;">Create a new task</div>
<div class="t" id="tp4" style="left:1468.8px;top:527.00px;font-size:25.44px;color:#1a1a1a;font-weight:700;letter-spacing:0.844px;">New</div>
<div class="a" style="left:1531px;top:524.5px;width:34px;height:29.5px;background:#0b4fad;border-radius:6px"></div>
<div class="t" id="tp5" style="left:1543.0px;top:532.00px;font-size:17.44px;color:#fff;font-weight:700;letter-spacing:0.000px;">1</div>
<div class="a" style="left:1438px;top:579px;width:555px;height:86px;background:#fff;border:1px solid #e2e3e8;border-radius:8px;box-shadow:0 3px 8px rgba(0,0,0,0.10)"></div>
<div class="a" style="left:1460px;top:606.5px;width:30px;height:30px;border:2.2px solid #0b4fad;border-radius:50%"></div>
<div class="t" id="tp6" style="left:1525.5px;top:597.00px;font-size:23.26px;color:#444;font-weight:400;letter-spacing:0.731px;">Define Navigation Scope</div>
<svg style="left:1521px;top:633px;" width="17" height="18" viewBox="0 0 17 18"><circle cx="8.5" cy="5.2" r="4.2" fill="none" stroke="#666" stroke-width="1.6"/><path d="M1 17.2v-1.5a5 5 0 0 1 5-5h5a5 5 0 0 1 5 5v1.5z" fill="none" stroke="#666" stroke-width="1.6" stroke-linejoin="round"/></svg>
<div class="t" id="tp7" style="left:1543.2px;top:632.00px;font-size:20.35px;color:#666;font-weight:400;letter-spacing:-0.266px;">Me</div>
<div class="a" style="left:1961.2px;top:609.2px;width:6px;height:6px;background:#0b4fad;border-radius:50%"></div>
<div class="a" style="left:1961.2px;top:618.5px;width:6px;height:6px;background:#0b4fad;border-radius:50%"></div>
<div class="a" style="left:1961.2px;top:627.8px;width:6px;height:6px;background:#0b4fad;border-radius:50%"></div>
<div class="a" style="left:1462px;top:689.5px;width:508px;height:1.5px;background:#cfcfcf"></div>
<svg style="left:2020px;top:812px;" width="8" height="14" viewBox="0 0 8 14"><path d="M7 1L2 12" stroke="#f0a020" stroke-width="2"/></svg>
</body></html>
